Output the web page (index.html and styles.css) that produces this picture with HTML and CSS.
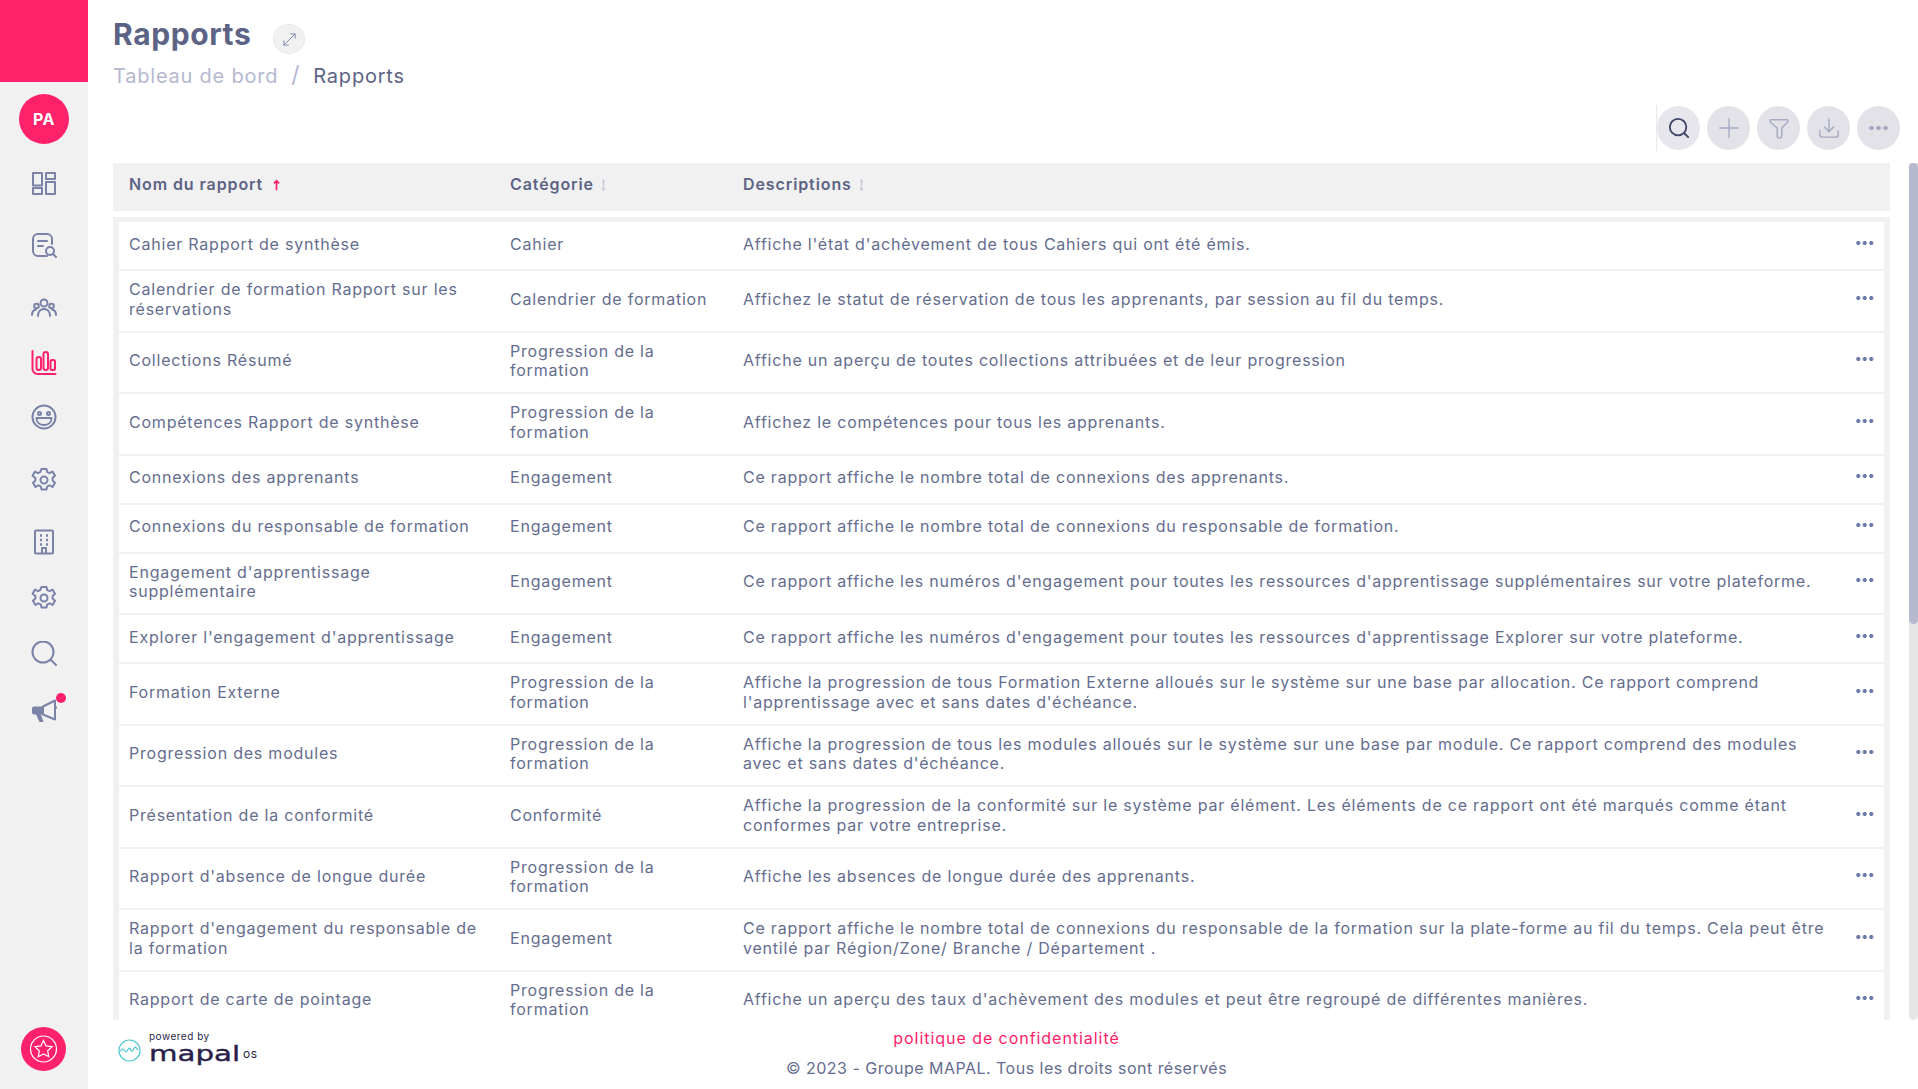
FILE: index.html
```html
<!DOCTYPE html>
<html lang="fr">
<head>
  <meta charset="UTF-8" />
  <title>Rapports</title>
  <link rel="stylesheet" href="styles.css">
</head>
<body>

  <aside class="sidebar">
    <div class="brand"></div>
    <div class="avatar">PA</div>
    <nav class="nav">
      <a class="nav-item first">
        <svg viewBox="0 0 26 26"><rect x="2" y="3" width="9" height="12.500"/><rect x="15" y="3" width="9" height="6"/><rect x="2" y="18" width="9" height="6"/><rect x="15" y="12" width="9" height="12"/></svg>
      </a>
      <a class="nav-item gap-l">
        <svg viewBox="0 0 26 26"><path d="M16 23H7a5 5 0 0 1-5-5V6a5 5 0 0 1 5-5h9a5 5 0 0 1 5 5v5"/><path d="M7 8h9M7 13h5"/><circle cx="19" cy="18" r="4"/><path d="M22 21l3 3"/></svg>
      </a>
      <a class="nav-item gap-l">
        <svg viewBox="0 0 26 26"><circle cx="13" cy="8" r="3.500"/><circle cx="5.500" cy="11" r="2.300"/><circle cx="20.500" cy="11" r="2.300"/><path d="M7 21c0-4 2.500-7 6-7s6 3 6 7M1 20c0-3 1.300-5 4-5.500M25 20c0-3-1.300-5-4-5.500"/></svg>
      </a>
      <a class="nav-item gap-s active">
        <svg viewBox="0 0 26 26"><path d="M1.500 1v18a5 5 0 0 0 5 5h18"/><rect x="5.500" y="7" width="4.500" height="13" rx="2.200"/><rect x="12.500" y="2" width="4.500" height="18" rx="2.200"/><rect x="19.500" y="10" width="4.500" height="10" rx="1.500"/></svg>
      </a>
      <a class="nav-item gap-s">
        <svg viewBox="0 0 26 26"><circle cx="13" cy="13" r="11.500"/><circle cx="8.500" cy="9.500" r="1.500"/><circle cx="17.500" cy="9.500" r="1.500"/><path d="M5.500 14h15c0 4.500-3.500 7-7.500 7s-7.500-2.500-7.500-7z"/></svg>
      </a>
      <a class="nav-item gap-l">
        <svg viewBox="0 0 26 26"><path d="M10.500 2h5l.8 3.200 2.300 1 2.900-1.700 2.500 4.300-2.400 2.200v2.500l2.400 2.200-2.500 4.300-2.900-1.700-2.300 1-.8 3.200h-5l-.8-3.200-2.300-1-2.900 1.700-2.500-4.300 2.400-2.200v-2.500L1.500 8.800 4 4.500l2.900 1.700 2.300-1z"/><circle cx="13" cy="13" r="3.500"/></svg>
      </a>
      <a class="nav-item gap-l">
        <svg viewBox="0 0 26 26"><rect x="4" y="1.500" width="18" height="23" rx="1"/><path class="thick" d="M9 6.500h2M15 6.500h2M9 11h2M15 11h2M9 15.500h2M15 15.500h2"/><path d="M11 24v-5h4v5"/></svg>
      </a>
      <a class="nav-item gap-m">
        <svg viewBox="0 0 26 26"><path d="M10.500 2h5l.8 3.200 2.300 1 2.900-1.700 2.500 4.300-2.400 2.200v2.500l2.400 2.200-2.500 4.300-2.900-1.700-2.300 1-.8 3.200h-5l-.8-3.200-2.300-1-2.900 1.700-2.500-4.300 2.400-2.200v-2.500L1.500 8.800 4 4.500l2.900 1.700 2.300-1z"/><circle cx="13" cy="13" r="3.500"/></svg>
      </a>
      <a class="nav-item gap-m">
        <svg viewBox="0 0 26 26"><circle cx="12" cy="11" r="10.500"/><path d="M20 19l5 5"/></svg>
      </a>
      <a class="nav-item gap-m has-dot">
        <svg viewBox="0 0 26 26"><g transform="translate(0 1)"><path class="solid" d="M1 10.500a2 2 0 0 1 2-2h8v8H3a2 2 0 0 1-2-2zM5 16.500h5l2.500 7.500H8.500z"/><path d="M12 8.500l12-6v19l-12-5zM24 9.500h1.500"/></g></svg>
        <span class="dot"></span>
      </a>
    </nav>
    <div class="star-badge">
      <svg viewBox="0 0 44 44"><circle cx="22" cy="22" r="13"/><path d="M22 13.500l2.600 5.400 5.900.8-4.300 4.100 1 5.900-5.200-2.800-5.200 2.800 1-5.900-4.300-4.100 5.900-.8z"/></svg>
    </div>
  </aside>

  <main class="content">
    <h1 class="title">Rapports <span class="expand"><svg viewBox="0 0 16 16"><path d="M2 14L14 2M9 2h5v5M2 9v5h5"/></svg></span></h1>
    <div class="breadcrumb"><a>Tableau de bord</a><span class="sep">/</span><span>Rapports</span></div>

    <div class="toolbar">
      <span class="toolbar-sep"></span>
      <button class="tool tool-search"><svg viewBox="0 0 24 24"><circle cx="11" cy="11" r="9"/><path d="M18 18l4 4"/></svg></button>
      <button class="tool"><svg viewBox="0 0 24 24"><path d="M12 2v20M2 12h20"/></svg></button>
      <button class="tool"><svg viewBox="0 0 24 24"><path d="M3.500 3h17a1.500 1.500 0 0 1 1 2.500L15 12v8.500a2.500 2.500 0 0 1-5 0V12L2.500 5.500a1.500 1.500 0 0 1 1-2.500z"/></svg></button>
      <button class="tool"><svg viewBox="0 0 24 24"><path d="M12 2v14M7 11l5 5 5-5M2 15v4a3 3 0 0 0 3 3h14a3 3 0 0 0 3-3v-4"/></svg></button>
      <button class="tool"><span class="more more-big"></span></button>
    </div>

    <div class="row table-head">
      <div>Nom du rapport<svg class="sort sort-first" viewBox="0 0 10 14"><path class="sort-on" d="M5 13V2M2 5l3-3 3 3"/></svg></div>
      <div>Catégorie<svg class="sort" viewBox="0 0 10 14"><path d="M5 1v12M3.500 3L5 1l1.500 2M3.500 11L5 13l1.500-2"/></svg></div>
      <div>Descriptions<svg class="sort" viewBox="0 0 10 14"><path d="M5 1v12M3.500 3L5 1l1.500 2M3.500 11L5 13l1.500-2"/></svg></div>
      <div></div>
    </div>

    <div class="table-body">
      <div class="row">
        <div>Cahier Rapport de synthèse</div>
        <div>Cahier</div>
        <div>Affiche l'état d'achèvement de tous Cahiers qui ont été émis.</div>
        <div><span class="more"></span></div>
      </div>
      <div class="row">
        <div>Calendrier de formation Rapport sur les<br>réservations</div>
        <div>Calendrier de formation</div>
        <div>Affichez le statut de réservation de tous les apprenants, par session au fil du temps.</div>
        <div><span class="more"></span></div>
      </div>
      <div class="row">
        <div>Collections Résumé</div>
        <div>Progression de la<br>formation</div>
        <div>Affiche un aperçu de toutes collections attribuées et de leur progression</div>
        <div><span class="more"></span></div>
      </div>
      <div class="row">
        <div>Compétences Rapport de synthèse</div>
        <div>Progression de la<br>formation</div>
        <div>Affichez le compétences pour tous les apprenants.</div>
        <div><span class="more"></span></div>
      </div>
      <div class="row">
        <div>Connexions des apprenants</div>
        <div>Engagement</div>
        <div>Ce rapport affiche le nombre total de connexions des apprenants.</div>
        <div><span class="more"></span></div>
      </div>
      <div class="row">
        <div>Connexions du responsable de formation</div>
        <div>Engagement</div>
        <div>Ce rapport affiche le nombre total de connexions du responsable de formation.</div>
        <div><span class="more"></span></div>
      </div>
      <div class="row">
        <div>Engagement d'apprentissage<br>supplémentaire</div>
        <div>Engagement</div>
        <div>Ce rapport affiche les numéros d'engagement pour toutes les ressources d'apprentissage supplémentaires sur votre plateforme.</div>
        <div><span class="more"></span></div>
      </div>
      <div class="row">
        <div>Explorer l'engagement d'apprentissage</div>
        <div>Engagement</div>
        <div>Ce rapport affiche les numéros d'engagement pour toutes les ressources d'apprentissage Explorer sur votre plateforme.</div>
        <div><span class="more"></span></div>
      </div>
      <div class="row">
        <div>Formation Externe</div>
        <div>Progression de la<br>formation</div>
        <div>Affiche la progression de tous Formation Externe alloués sur le système sur une base par allocation. Ce rapport comprend<br>l'apprentissage avec et sans dates d'échéance.</div>
        <div><span class="more"></span></div>
      </div>
      <div class="row">
        <div>Progression des modules</div>
        <div>Progression de la<br>formation</div>
        <div>Affiche la progression de tous les modules alloués sur le système sur une base par module. Ce rapport comprend des modules<br>avec et sans dates d'échéance.</div>
        <div><span class="more"></span></div>
      </div>
      <div class="row">
        <div>Présentation de la conformité</div>
        <div>Conformité</div>
        <div>Affiche la progression de la conformité sur le système par élément. Les éléments de ce rapport ont été marqués comme étant<br>conformes par votre entreprise.</div>
        <div><span class="more"></span></div>
      </div>
      <div class="row">
        <div>Rapport d'absence de longue durée</div>
        <div>Progression de la<br>formation</div>
        <div>Affiche les absences de longue durée des apprenants.</div>
        <div><span class="more"></span></div>
      </div>
      <div class="row">
        <div>Rapport d'engagement du responsable de<br>la formation</div>
        <div>Engagement</div>
        <div>Ce rapport affiche le nombre total de connexions du responsable de la formation sur la plate-forme au fil du temps. Cela peut être<br>ventilé par Région/Zone/ Branche / Département .</div>
        <div><span class="more"></span></div>
      </div>
      <div class="row">
        <div>Rapport de carte de pointage</div>
        <div>Progression de la<br>formation</div>
        <div>Affiche un aperçu des taux d'achèvement des modules et peut être regroupé de différentes manières.</div>
        <div><span class="more"></span></div>
      </div>
    </div>

    <footer class="footer">
      <div class="logo">
        <svg class="logo-mark" viewBox="0 0 24 24"><circle cx="12" cy="12" r="11"/><path d="M2 13c2-3 3.500-3 5-1s2 2 3.500-1 2-1 3 1 2 0 3-2 2-2 3 0 1 1 2 1"/></svg>
        <div class="logo-text">
          <span class="powered">powered by</span>
          <div class="wordmark-row">
            <span class="wordmark">mapal</span>
            <span class="os">os</span>
          </div>
        </div>
      </div>
      <div class="legal">
        <a class="privacy">politique de confidentialité</a>
        <span class="copyright">© 2023 - Groupe MAPAL. Tous les droits sont réservés</span>
      </div>
      <div></div>
    </footer>
  </main>

  <div class="scrollbar"><div class="thumb"></div></div>

</body>
</html>
```

FILE: styles.css
```css
* {
  box-sizing: border-box;
}

html, body {
  height: 100%;
}

body {
  margin: 0;
  display: flex;
  overflow: hidden;
  font-family: Inter, "Open Sans", sans-serif;
  font-size: 16px;
  letter-spacing: 0.78px;
  color: #656d8e;
  background: #fff;
}

/* sidebar */
.sidebar {
  width: 88px;
  flex: none;
  display: flex;
  flex-direction: column;
  align-items: center;
  background: #f1f1f1;
}

.brand {
  align-self: stretch;
  height: 82px;
  background: #ff226b;
}

.avatar {
  width: 50px;
  height: 50px;
  margin-top: 12px;
  border-radius: 50%;
  background: #ff226b;
  color: #fff;
  font-weight: 700;
  font-size: 16px;
  letter-spacing: 0.5px;
  display: flex;
  align-items: center;
  justify-content: center;
}

.nav {
  display: flex;
  flex-direction: column;
  align-items: center;
}

.nav-item {
  position: relative;
  display: block;
  width: 26px;
  height: 26px;
}

.nav-item svg {
  display: block;
  width: 26px;
  height: 26px;
  fill: none;
  stroke: #7b82a8;
  stroke-width: 2;
  stroke-linecap: round;
  stroke-linejoin: round;
}

.nav-item.first { margin-top: 26px; }
.nav-item.gap-l { margin-top: 36.5px; }
.nav-item.gap-s { margin-top: 28.5px; }
.nav-item.gap-m { margin-top: 30px; }

.nav-item.active svg {
  stroke: #ff226b;
}

.nav-item .thick {
  stroke-width: 2.5;
  stroke-linecap: butt;
}

.nav-item .solid {
  fill: #7b82a8;
  stroke: none;
}

.dot {
  position: absolute;
  top: -4px;
  right: -9px;
  width: 10px;
  height: 10px;
  border-radius: 50%;
  background: #ff226b;
}

.star-badge {
  width: 45px;
  height: 44px;
  margin: auto 1px 18px 0;
  border-radius: 50%;
  background: #ff226b;
}

.star-badge svg {
  display: block;
  width: 100%;
  height: 100%;
  fill: none;
  stroke: #fff;
  stroke-width: 1.2;
}

/* main */
.content {
  flex: 1;
  min-width: 0;
  height: 100vh;
  display: flex;
  flex-direction: column;
  padding-left: 25px;
}

.title {
  margin: 0;
  height: 60px;
  padding-top: 16px;
  display: flex;
  align-items: flex-start;
  gap: 22px;
  font-size: 30px;
  line-height: 36px;
  font-weight: 700;
  letter-spacing: 0.6px;
  color: #5c6385;
}

.expand {
  width: 32px;
  height: 30px;
  margin-top: 8px;
  border-radius: 50%;
  background: #f1f1f1;
  border: 1px solid #e8e8ee;
  display: flex;
  align-items: center;
  justify-content: center;
}

.expand svg {
  width: 15px;
  height: 15px;
  fill: none;
  stroke: #7b82a8;
  stroke-width: 1;
}

.breadcrumb {
  height: 30px;
  font-size: 20px;
  line-height: 30px;
  letter-spacing: 0.78px;
  color: #5c6385;
}

.breadcrumb a {
  color: #b5b8cf;
}

.breadcrumb .sep {
  margin: 0 13px;
  font-size: 23px;
  color: #b5b8cf;
}

.toolbar {
  display: flex;
  justify-content: flex-end;
  align-items: center;
  gap: 7px;
  height: 44px;
  margin: 16px -10px 0 0;
}

.toolbar-sep {
  width: 1px;
  height: 46px;
  margin-right: -7px;
  background: #e8e8e8;
}

.tool {
  width: 43px;
  height: 44px;
  padding: 0;
  border: none;
  border-radius: 50%;
  background: #e2e2e8;
  display: flex;
  align-items: center;
  justify-content: center;
}

.tool svg {
  width: 22px;
  height: 22px;
  fill: none;
  stroke: #a5a9c2;
  stroke-width: 1.5;
  stroke-linecap: round;
  stroke-linejoin: round;
}

.tool-search {
  background: #e6e6ec;
}

.tool-search svg {
  stroke: #3f4668;
  stroke-width: 2;
}

/* table */
.row {
  display: grid;
  grid-template-columns: 381px 233px 1fr 40px;
  align-items: center;
  min-height: 49px;
  padding: 9px 10px 11px 10px;
  background: #fff;
  border-bottom: 2px solid #f1f1f1;
  line-height: 19.750px;
}

.table-head {
  width: 1777px;
  height: 48px;
  min-height: 0;
  margin-top: 13px;
  padding: 0 0 4px 16px;
  border: none;
  background: #f1f1f1;
  font-size: 16px;
  font-weight: 600;
  letter-spacing: 0.9px;
  color: #5c6385;
}

.sort {
  width: 9px;
  height: 12px;
  margin-left: 5px;
  vertical-align: -1px;
  fill: none;
  stroke: #c9cbd9;
  stroke-width: 1.6;
}

.sort-first {
  margin-left: 9px;
}

.sort .sort-on {
  stroke: #ff226b;
  stroke-width: 2;
}

.table-body {
  width: 1777px;
  flex: 1;
  min-height: 0;
  margin-top: 6px;
  padding: 5px 6px 0;
  overflow: hidden;
  background: #f1f1f1;
}

.more {
  display: block;
  width: 19px;
  height: 4px;
  margin: 0 0 4px auto;
  background: radial-gradient(circle, #6c7aa8 1.8px, transparent 2.2px) 0 0 / 6.500px 4px;
}

.more-big {
  width: 21px;
  margin: 0;
  background: radial-gradient(circle, #a5a9c2 2px, transparent 2.4px) 0 0 / 7px 4px;
}

/* footer */
.footer {
  width: 1777px;
  height: 69px;
  flex: none;
  display: grid;
  grid-template-columns: 1fr auto 1fr;
}

.logo {
  display: flex;
  align-items: flex-start;
  gap: 8px;
  padding: 10px 0 0 5px;
}

.logo-mark {
  width: 23px;
  height: 23px;
  margin-top: 9px;
  fill: none;
  stroke: #4ec5cf;
  stroke-width: 1.2;
}

.logo-text {
  display: flex;
  flex-direction: column;
  color: #2a1f4a;
}

.powered {
  font-size: 10px;
  line-height: 12px;
  letter-spacing: 0.5px;
}

.wordmark-row {
  display: flex;
  align-items: flex-start;
}

.wordmark {
  width: 94px;
  font-family: "DejaVu Sans", sans-serif;
  font-size: 22px;
  line-height: 24px;
  letter-spacing: 0;
  -webkit-text-stroke: 0.4px #2a1f4a;
  transform: scaleX(1.33);
  transform-origin: left center;
}

.os {
  margin-top: 6px;
  font-size: 12px;
  line-height: 12px;
  letter-spacing: 0.5px;
}

.legal {
  display: flex;
  flex-direction: column;
  align-items: center;
  gap: 10px;
  padding: 8px 0 0 10px;
}

.privacy {
  color: #ff226b;
  letter-spacing: 0.95px;
}

.copyright {
  letter-spacing: 0.48px;
}

/* scrollbar */
.scrollbar {
  width: 9px;
  height: 857px;
  flex: none;
  margin: 163px 0 0 19px;
  border-radius: 0 0 6px 6px;
  background: #e6e6e6;
}

.thumb {
  height: 461px;
  border-radius: 6px;
  background: #b5b8cf;
}
```
